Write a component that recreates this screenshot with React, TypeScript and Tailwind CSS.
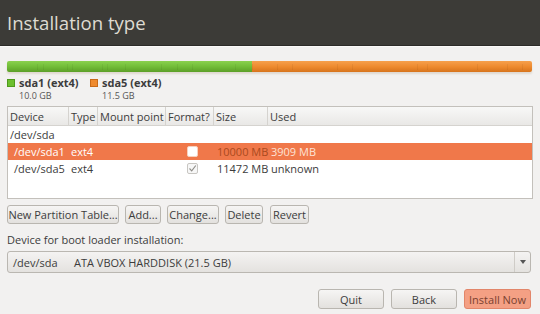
import React from "react";

const cols = "grid grid-cols-[61px_29px_68px_48px_54px_1fr]";

function Btn({ label, className = "" }: { label: string; className?: string }) {
  return (
    <div
      className={
        "h-[19px] px-[2px] flex items-center justify-center whitespace-nowrap rounded-[3px] border border-[#b9b6b0] bg-gradient-to-b from-[#f6f5f4] to-[#e3e1de] text-[#3c3c3c] text-[11px] leading-none " +
        className
      }
    >
      {label}
    </div>
  );
}

function Check({ checked, white }: { checked?: boolean; white?: boolean }) {
  return (
    <div
      className={
        "w-[11px] h-[11px] rounded-[2px] border flex items-center justify-center " +
        (white ? "bg-white border-[#f6d2c0]" : "bg-[#f7f7f7] border-[#c8c6c2]")
      }
    >
      {checked && (
        <svg width="9" height="9" viewBox="0 0 9 9">
          <path d="M1.5 4.5 L3.7 6.8 L7.8 1.5" fill="none" stroke="#8f8d88" strokeWidth="1.1" />
        </svg>
      )}
    </div>
  );
}

export default function App() {
  const ticks = [30, 36, 60, 65, 95, 100, 118, 154, 170, 185, 228, 245, 270, 285, 330, 345, 410, 420, 470, 500, 515, 525];
  return (
    <div
      className="w-[540px] h-[314px] bg-[#f2f1f0] flex flex-col text-[#3c3c3c] overflow-hidden whitespace-nowrap"
      style={{ fontFamily: "'Open Sans', 'Noto Sans', sans-serif" }}
    >
      {/* header */}
      <div className="h-[46px] bg-[#3c3b37] flex items-center px-[7px] border-b border-[#2c2b28]">
        <span className="text-[#dfdbd2] text-[18.6px]">Installation type</span>
      </div>
      <div className="h-px bg-[#fbfaf9]" />

      <div className="px-[7px] flex flex-col">
        {/* usage bar */}
        <div className="mt-[14px] h-[11px] w-[525px] flex rounded-[2px] overflow-hidden shadow-[0_2px_2px_rgba(150,120,80,0.2)] relative">
          <div className="w-[245px] bg-gradient-to-b from-[#8ad14e] via-[#72bd38] to-[#5c9f28]" />
          <div className="flex-1 bg-gradient-to-b from-[#f6a04c] via-[#ee8b2f] to-[#d7741c]" />
          {ticks.map((x, i) => (
            <div key={i} className="absolute top-[3px] h-[6px] w-px bg-black/5" style={{ left: x }} />
          ))}
        </div>

        {/* legend */}
        <div className="mt-[5px] flex text-[11px] leading-none">
          <div className="flex w-[83px]">
            <div className="w-[8px] h-[8px] mt-[2px] bg-[#6cbf2e] border border-[#4f9a1c]" />
            <div className="ml-[4px] flex flex-col">
              <span className="font-bold text-[#3c3c3c]">sda1 (ext4)</span>
              <span className="mt-[3px] text-[9px] text-[#555]">10.0 GB</span>
            </div>
          </div>
          <div className="flex">
            <div className="w-[8px] h-[8px] mt-[2px] bg-[#ef8a2e] border border-[#c96a18]" />
            <div className="ml-[4px] flex flex-col">
              <span className="font-bold text-[#3c3c3c]">sda5 (ext4)</span>
              <span className="mt-[3px] text-[9px] text-[#555]">11.5 GB</span>
            </div>
          </div>
        </div>

        {/* table */}
        <div className="mt-[6px] h-[93px] border border-[#c3c0bb] bg-white text-[11px] leading-none">
          <div className={cols + " h-[19px] bg-gradient-to-b from-[#f8f8f7] to-[#e9e8e6] border-b border-[#d5d3cf]"}>
            {["Device", "Type", "Mount point", "Format?", "Size", "Used"].map((h, i) => (
              <div key={i} className={"flex items-center pl-[2px] overflow-hidden " + (i < 5 ? "border-r border-[#d5d3cf]" : "")}>
                {h}
              </div>
            ))}
          </div>
          <div className="h-[17px] flex items-center pl-[2px]">/dev/sda</div>
          <div className={cols + " h-[17px] bg-[#f0784a] text-white"}>
            <div className="flex items-center pl-[6px]">/dev/sda1</div>
            <div className="flex items-center pl-[2px]">ext4</div>
            <div />
            <div className="flex items-center justify-center pl-[4px]"><Check white /></div>
            <div className="flex items-center pl-[3px] text-[#a94a1e]">10000 MB</div>
            <div className="flex items-center pl-[3px] text-[#fde3d6]">3909 MB</div>
          </div>
          <div className={cols + " h-[17px]"}>
            <div className="flex items-center pl-[6px]">/dev/sda5</div>
            <div className="flex items-center pl-[2px]">ext4</div>
            <div />
            <div className="flex items-center justify-center pl-[4px]"><Check checked /></div>
            <div className="flex items-center pl-[3px]">11472 MB</div>
            <div className="flex items-center pl-[3px]">unknown</div>
          </div>
        </div>

        {/* partition buttons */}
        <div className="mt-[6px] flex">
          <Btn label="New Partition Table..." className="w-[112px]" />
          <Btn label="Add..." className="w-[36px] ml-[6px]" />
          <Btn label="Change..." className="w-[52px] ml-[6px]" />
          <Btn label="Delete" className="w-[38px] ml-[6px]" />
          <Btn label="Revert" className="w-[39px] ml-[7px]" />
        </div>

        <div className="mt-[10px] text-[11px] leading-none">Device for boot loader installation:</div>

        {/* combobox */}
        <div className="mt-[6px] h-[22px] w-[524px] flex items-center rounded-[3px] border border-[#bab7b1] bg-gradient-to-b from-[#f4f3f2] to-[#e4e2df] text-[11px] leading-none">
          <span className="pl-[5px] w-[66px]">/dev/sda</span>
          <span>ATA VBOX HARDDISK (21.5 GB)</span>
          <div className="ml-auto h-full w-[16px] border-l border-[#cfccc7] flex items-center justify-center">
            <svg width="6" height="4" viewBox="0 0 6 4">
              <path d="M0 0 L6 0 L3 4 Z" fill="#555" />
            </svg>
          </div>
        </div>

        {/* bottom buttons */}
        <div className="mt-[16px] flex justify-end gap-[7px] pr-[2px]">
          <Btn label="Quit" className="w-[66px] h-[20px]" />
          <Btn label="Back" className="w-[66px] h-[20px]" />
          <Btn
            label="Install Now"
            className="w-[67px] h-[20px] !bg-none !bg-[#f4a084] !border-[#e2866a] !text-[#7a4030]"
          />
        </div>
      </div>
    </div>
  );
}
